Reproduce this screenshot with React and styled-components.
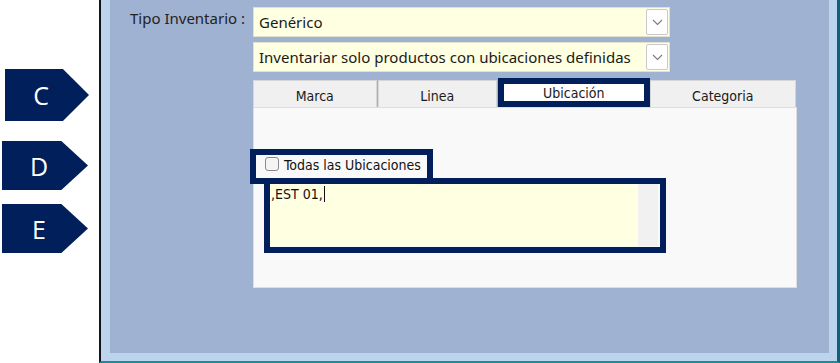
import React from 'react'
import styled, { createGlobalStyle } from 'styled-components'

const NAVY = '#001f5b'

const GlobalStyle = createGlobalStyle`
  html, body {
    margin: 0;
    padding: 0;
    background: #ffffff;
  }
  body {
    font-family: 'Noto Sans', 'DejaVu Sans', sans-serif;
    color: #1a1a1a;
  }
`

const TABS = [
  { text: 'Marca', width: 124 },
  { text: 'Linea', width: 120 },
  { text: 'Ubicación', width: 152, active: true },
  { text: 'Categoria', width: 147 }
]

const CALLOUTS = [
  { letter: 'C', top: 69, height: 52, left: 5, width: 84 },
  { letter: 'D', top: 20, height: 49, left: 2, width: 86 },
  { letter: 'E', top: 14, height: 49, left: 2, width: 86 }
]

const Chevron = () => (
  <svg width='11' height='7' viewBox='0 0 11 7'>
    <polyline points='1,1 5.5,5.5 10,1' fill='none' stroke='#7a7a7a' strokeWidth='1.1' />
  </svg>
)

const Combo = ({ value }) => (
  <ComboBox>
    <ComboText>{value}</ComboText>
    <ComboButton>
      <Chevron />
    </ComboButton>
  </ComboBox>
)

const App = () => {
  return (
    <>
      <GlobalStyle />
      <Page>
        <Callouts>
          {CALLOUTS.map(c => (
            <Callout key={c.letter} $top={c.top} $h={c.height} $left={c.left} $w={c.width}>
              {c.letter}
            </Callout>
          ))}
        </Callouts>
        <Window>
          <Frame>
            <Panel>
              <FieldRow>
                <FieldLabel>Tipo Inventario :</FieldLabel>
                <Combo value='Genérico' />
              </FieldRow>
              <FieldRow>
                <FieldLabel />
                <Combo value='Inventariar solo productos con ubicaciones definidas' />
              </FieldRow>
              <TabsArea>
                <TabStrip>
                  {TABS.map(t => (
                    <Tab key={t.text} $w={t.width} $active={t.active}>
                      {t.text}
                    </Tab>
                  ))}
                </TabStrip>
                <TabPanel>
                  <CheckRow>
                    <CheckBox />
                    <CheckLabel>Todas las Ubicaciones</CheckLabel>
                  </CheckRow>
                  <Memo>
                    <MemoText>
                      ,EST 01,<Caret />
                    </MemoText>
                    <MemoScroll />
                  </Memo>
                  <Highlight $top={41} $left={-4} $w={183} $h={35} />
                  <Highlight $top={70} $left={10} $w={402} $h={75} />
                </TabPanel>
              </TabsArea>
            </Panel>
          </Frame>
        </Window>
      </Page>
    </>
  )
}

const Page = styled.div`
  display: flex;
  width: 840px;
  height: 363px;
  overflow: hidden;
`

const Callouts = styled.div`
  width: 99px;
  flex: none;
  display: flex;
  flex-direction: column;
`

const Callout = styled.div`
  margin-top: ${p => p.$top}px;
  margin-left: ${p => p.$left}px;
  width: ${p => p.$w}px;
  height: ${p => p.$h}px;
  flex: none;
  background: ${NAVY};
  clip-path: polygon(0 0, 69% 0, 100% 50%, 69% 100%, 0 100%);
  color: #ffffff;
  font-family: 'Open Sans', 'Noto Sans', sans-serif;
  font-size: 25px;
  display: flex;
  align-items: center;
  justify-content: center;
  padding-right: 12px;
  box-sizing: border-box;
`

const Window = styled.div`
  flex: 1;
  display: flex;
  border-left: 2px solid #151515;
  border-right: 3px solid #0f6178;
  border-bottom: 2px solid #1a8c9a;
`

const Frame = styled.div`
  flex: 1;
  display: flex;
  background: #bcd5ec;
  padding: 0 8px 8px 9px;
`

const Panel = styled.div`
  flex: 1;
  background: #a0b2d2;
  padding: 7px 0 0 20px;
  display: flex;
  flex-direction: column;
  box-sizing: border-box;
`

const FieldRow = styled.div`
  display: flex;
  align-items: center;
  height: 30px;
  margin-bottom: 5px;
`

const FieldLabel = styled.div`
  width: 123px;
  flex: none;
  font-size: 15px;
  color: #222;
  align-self: flex-start;
  padding-top: 1px;
`

const ComboBox = styled.div`
  width: 417px;
  height: 30px;
  box-sizing: border-box;
  background: #ffffe1;
  border: 1px solid #e2e2cc;
  display: flex;
  align-items: center;
  padding: 1px;
`

const ComboText = styled.div`
  flex: 1;
  font-size: 15px;
  padding-left: 4px;
  white-space: nowrap;
  overflow: hidden;
`

const ComboButton = styled.div`
  width: 22px;
  height: 26px;
  box-sizing: border-box;
  background: #ffffff;
  border: 1px solid #c9c9c9;
  border-radius: 2px;
  display: flex;
  align-items: center;
  justify-content: center;
`

const TabsArea = styled.div`
  margin-left: 123px;
  margin-top: 1px;
  width: 544px;
  display: flex;
  flex-direction: column;
`

const TabStrip = styled.div`
  display: flex;
  align-items: flex-end;
  height: 29px;
`

const Tab = styled.div`
  width: ${p => p.$w}px;
  height: ${p => (p.$active ? 29 : 27)}px;
  box-sizing: border-box;
  background: ${p => (p.$active ? '#ffffff' : '#f0f0f0')};
  border: ${p => (p.$active ? `6px solid ${NAVY}` : '1px solid #d6d6d6')};
  border-bottom: ${p => (p.$active ? `6px solid ${NAVY}` : 'none')};
  margin-right: ${p => (p.$active ? 0 : 1)}px;
  display: flex;
  align-items: center;
  justify-content: center;
  padding-top: ${p => (p.$active ? 0 : 3)}px;
  font-family: 'DejaVu Sans Condensed', 'DejaVu Sans', sans-serif;
  font-size: 14px;
  color: #1a1a1a;
  position: relative;
  z-index: ${p => (p.$active ? 2 : 1)};
`

const TabPanel = styled.div`
  position: relative;
  height: 181px;
  box-sizing: border-box;
  background: #f9f9f9;
  border: 1px solid #dedede;
  padding: 49px 0 0 11px;
`

const CheckRow = styled.div`
  display: flex;
  align-items: center;
  height: 14px;
`

const CheckBox = styled.div`
  width: 14px;
  height: 14px;
  box-sizing: border-box;
  border: 1px solid #8a8a8a;
  border-radius: 3px;
  background: #f4f4f4;
  flex: none;
`

const CheckLabel = styled.div`
  margin-left: 5px;
  font-family: 'DejaVu Sans Condensed', 'DejaVu Sans', sans-serif;
  font-size: 14px;
  color: #111;
  padding-top: 1px;
`

const Memo = styled.div`
  margin-top: 12px;
  margin-left: 4px;
  width: 389px;
  height: 63px;
  display: flex;
`

const MemoText = styled.div`
  flex: 1;
  background: #ffffe1;
  font-family: 'DejaVu Sans Condensed', 'DejaVu Sans', sans-serif;
  font-size: 14px;
  padding: 3px 0 0 2px;
  color: #111;
`

const Caret = styled.span`
  display: inline-block;
  width: 1px;
  height: 16px;
  background: #111;
  vertical-align: -3px;
  margin-left: 1px;
`

const MemoScroll = styled.div`
  width: 20px;
  background: #f1f1f1;
`

const Highlight = styled.div`
  position: absolute;
  top: ${p => p.$top}px;
  left: ${p => p.$left}px;
  width: ${p => p.$w}px;
  height: ${p => p.$h}px;
  box-sizing: border-box;
  border: 6px solid ${NAVY};
  pointer-events: none;
`

export default App
